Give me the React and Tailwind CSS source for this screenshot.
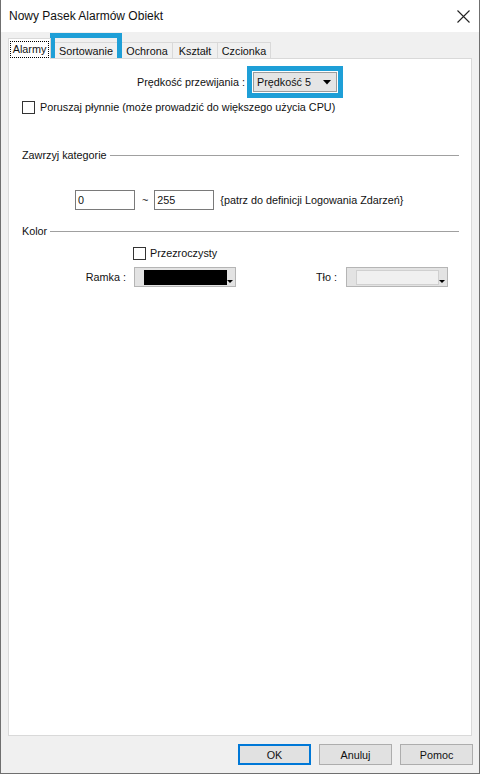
import React from "react";

const F = { fontFamily: '"Liberation Sans", Arial, sans-serif' };

function Tab({ label, w, selected }) {
  if (selected) {
    return (
      <div className="relative z-10 flex h-[21px] items-start justify-center border border-b-0 border-[#d9d9d9] bg-white pt-[2px]" style={{ width: w }}>
        <span className="border border-dotted border-black px-[2px] py-[1px] leading-[13px]">{label}</span>
      </div>
    );
  }
  return (
    <div className="flex h-[17px] items-center justify-center border border-b-0 border-l-0 border-[#d9d9d9] bg-[#f0f0f0]" style={{ width: w }}>
      {label}
    </div>
  );
}

function Checkbox() {
  return <div className="h-[13px] w-[13px] shrink-0 border border-[#333] bg-white" />;
}

function ColorCombo({ inner }) {
  return (
    <div className="relative flex h-[20px] w-[102px] items-center border border-[#b5b5b5] bg-[#e3e3e3] pl-[9px]">
      <div className={`h-[15px] w-[83px] ${inner}`} />
      <svg className="absolute bottom-[2px] right-[2px]" width="6" height="4" viewBox="0 0 6 4">
        <path d="M0 0h6L3 3z" fill="#000" />
      </svg>
    </div>
  );
}

function Button({ children, primary }) {
  return (
    <div
      className={`flex h-[21px] w-[73px] items-center justify-center bg-[#e1e1e1] ${
        primary ? "border-2 border-[#0078d7]" : "border border-[#adadad]"
      }`}
    >
      {children}
    </div>
  );
}

export default function App() {
  return (
    <div className="flex h-[774px] w-[480px] flex-col overflow-hidden border-x border-b border-[#6f6f6f] bg-[#f0f0f0] text-[10.8px] leading-[14px] text-[#111]" style={F}>
      {/* title bar */}
      <div className="flex h-[32px] shrink-0 items-center justify-between bg-white pl-[8px] pr-[8px]">
        <span className="text-[12px]">Nowy Pasek Alarmów Obiekt</span>
        <svg width="13" height="13" viewBox="0 0 13 13" className="mr-[1px]">
          <path d="M0.5 0.5L12.5 12.5M12.5 0.5L0.5 12.5" stroke="#222" strokeWidth="1.1" />
        </svg>
      </div>

      {/* tabs */}
      <div className="relative ml-[7px] mt-[6px] flex items-end">
        <Tab label="Alarmy" w={43} selected />
        <Tab label="Sortowanie" w={71} />
        <Tab label="Ochrona" w={51} />
        <Tab label="Kształt" w={45} />
        <Tab label="Czcionka" w={53} />
        <div className="pointer-events-none absolute left-[42px] top-[-5px] h-[31px] w-[72px] border-[5px] border-[#1e9fd7]" />
      </div>

      {/* panel */}
      <div className="relative -mt-[1px] ml-[7px] flex h-[678px] w-[464px] flex-col border border-[#d9d9d9] bg-white">
        {/* speed row */}
        <div className="mt-[7px] flex items-center">
          <div className="w-[238px] pr-[2px] text-right">Prędkość przewijania :</div>
          <div className="h-[32px] w-[96px] border-[5px] border-[#1e9fd7] p-[1px]">
            <div className="flex h-full items-center justify-between border border-[#9c9c9c] bg-[#e5e5e5] pl-[3px] pr-[5px]">
              <span>Prędkość 5</span>
              <svg width="8" height="5" viewBox="0 0 8 5">
                <path d="M0 0h8L4 4.5z" fill="#000" />
              </svg>
            </div>
          </div>
        </div>

        {/* smooth checkbox */}
        <div className="ml-[13px] mt-[2px] flex h-[14px] items-center gap-[5px]">
          <Checkbox />
          <span>Poruszaj płynnie (może prowadzić do większego użycia CPU)</span>
        </div>

        {/* Zawrzyj kategorie */}
        <div className="ml-[13px] mr-[12px] mt-[34px] flex h-[14px] items-center gap-[3px]">
          <span>Zawrzyj kategorie</span>
          <div className="h-px flex-1 bg-[#a0a0a0]" />
        </div>

        {/* range */}
        <div className="ml-[66px] mt-[28px] flex h-[20px] items-center">
          <div className="flex h-[20px] w-[60px] items-center border border-[#7a7a7a] pl-[2px]">0</div>
          <span className="ml-[7px] mr-[6px]">~</span>
          <div className="flex h-[20px] w-[60px] items-center border border-[#7a7a7a] pl-[2px]">255</div>
          <span className="ml-[6px]">{"{patrz do definicji Logowania Zdarzeń}"}</span>
        </div>

        {/* Kolor */}
        <div className="ml-[13px] mr-[12px] mt-[14px] flex h-[14px] items-center gap-[3px]">
          <span>Kolor</span>
          <div className="h-px flex-1 bg-[#a0a0a0]" />
        </div>

        <div className="ml-[124px] mt-[8px] flex h-[14px] items-center gap-[4px]">
          <Checkbox />
          <span>Przezroczysty</span>
        </div>

        <div className="mt-[7px] flex h-[20px] items-center">
          <div className="w-[125px] pr-[8px] text-right">Ramka :</div>
          <ColorCombo inner="bg-black" />
          <div className="w-[110px] pr-[9px] text-right">Tło :</div>
          <ColorCombo inner="bg-[#f0f0f0] border border-[#d0d0d0]" />
        </div>
      </div>

      {/* buttons */}
      <div className="mt-[8px] flex justify-end gap-[8px] pr-[6px]">
        <Button primary>OK</Button>
        <Button>Anuluj</Button>
        <Button>Pomoc</Button>
      </div>
    </div>
  );
}
